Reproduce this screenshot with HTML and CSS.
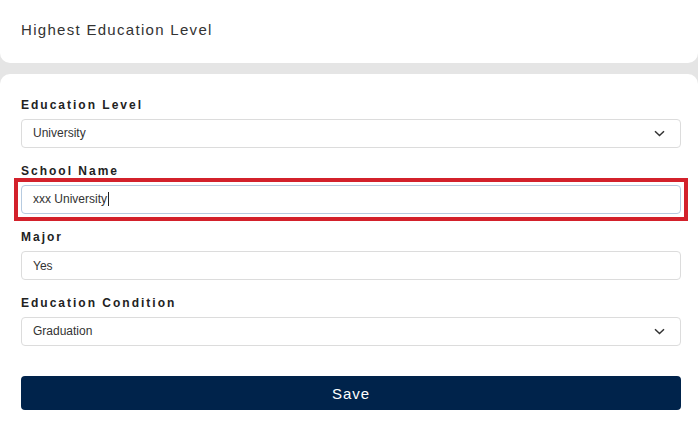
FILE: index.html
```html
<!DOCTYPE html>
<html lang="en">
<head>
    <meta charset="UTF-8">
    <meta name="viewport" content="width=device-width, initial-scale=1.0">
    <title>Highest Education Level</title>
    <link rel="stylesheet" href="styles.css">
</head>
<body>
    <div class="page-header">
        <h1>Highest Education Level</h1>
    </div>

    <form class="edu-form" onsubmit="return false">
        <div class="input-group">
            <label for="level">Education Level</label>
            <div class="select-wrap">
                <select id="level">
                    <option>University</option>
                    <option>High School</option>
                    <option>Master</option>
                </select>
                <svg class="chevron" width="11" height="7" viewBox="0 0 11 7"><path d="M1 1.2 L5.5 5.5 L10 1.2" fill="none" stroke="#333" stroke-width="1.5"/></svg>
            </div>
        </div>

        <div class="input-group">
            <label for="school">School Name</label>
            <div class="highlight">
                <div class="field focused" id="school">xxx University<span class="caret"></span></div>
            </div>
        </div>

        <div class="input-group">
            <label for="major">Major</label>
            <input type="text" id="major" class="field" value="Yes">
        </div>

        <div class="input-group">
            <label for="condition">Education Condition</label>
            <div class="select-wrap">
                <select id="condition">
                    <option>Graduation</option>
                    <option>Studying</option>
                </select>
                <svg class="chevron" width="11" height="7" viewBox="0 0 11 7"><path d="M1 1.2 L5.5 5.5 L10 1.2" fill="none" stroke="#333" stroke-width="1.5"/></svg>
            </div>
        </div>

        <button type="submit" class="save-button">Save</button>
    </form>
</body>
</html>
```

FILE: styles.css
```css
body {
    font-family: 'Liberation Sans', Arial, sans-serif;
    margin: 0;
    background-color: #e5e5e5;
    color: #333;
}
.page-header {
    background-color: #ffffff;
    height: 63px;
    border-radius: 0 0 10px 10px;
    padding: 0 21px;
    display: flex;
    align-items: center;
    margin-bottom: 11px;
}
.page-header h1 {
    margin: 0;
    font-size: 15px;
    font-weight: normal;
    letter-spacing: 1.3px;
    color: #333;
    padding-bottom: 4px;
}
.edu-form {
    background-color: #ffffff;
    border-radius: 10px 10px 0 0;
    padding: 23px 17px 40px 21px;
    min-height: 300px;
}
.input-group {
    margin-bottom: 15px;
}
label {
    display: block;
    font-size: 12px;
    font-weight: bold;
    letter-spacing: 2px;
    line-height: 16px;
    color: #222;
    margin-bottom: 6px;
}
.field,
select {
    display: block;
    box-sizing: border-box;
    width: 100%;
    height: 29px;
    padding: 0 11px;
    border: 1px solid #dcdcdc;
    border-radius: 4px;
    background-color: #fff;
    font-family: 'Liberation Sans', Arial, sans-serif;
    font-size: 12px;
    color: #333;
    line-height: 27px;
    outline: none;
}
select {
    appearance: none;
    -webkit-appearance: none;
}
.select-wrap {
    position: relative;
}
.chevron {
    position: absolute;
    right: 16px;
    top: 11px;
    pointer-events: none;
}
.field.focused {
    border-color: #b7cbe0;
}
.caret {
    display: inline-block;
    width: 1px;
    height: 14px;
    background-color: #222;
    vertical-align: -3px;
    margin-left: 1px;
}
.highlight {
    position: relative;
}
.highlight::after {
    content: "";
    position: absolute;
    top: -7px;
    left: -7px;
    right: -7px;
    bottom: -7px;
    border: 4px solid #d3212b;
    pointer-events: none;
}
.save-button {
    display: block;
    width: 100%;
    height: 34px;
    margin-top: 30px;
    border: none;
    border-radius: 4px;
    background-color: #00234b;
    color: #fff;
    font-family: 'Liberation Sans', Arial, sans-serif;
    font-size: 15px;
    letter-spacing: 1px;
    cursor: pointer;
}
```
